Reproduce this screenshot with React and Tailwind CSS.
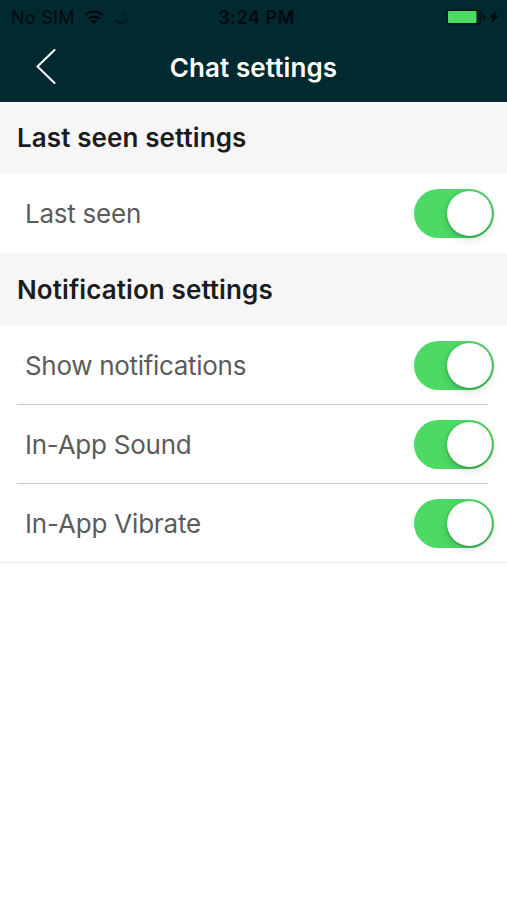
import React, { useState } from "react";

const sections = [
  {
    title: "Last seen settings",
    headerStyle: "h-[71px]",
    rows: [
      { id: "lastSeen", label: "Last seen", rowStyle: "h-20", labelStyle: "tracking-[-0.25px]" },
    ],
  },
  {
    title: "Notification settings",
    headerStyle: "h-[72px] pt-px",
    rows: [
      { id: "notifications", label: "Show notifications", rowStyle: "h-[79px] pt-px", labelStyle: "tracking-[-0.31px]" },
      { id: "sound", label: "In-App Sound", rowStyle: "h-[79px]", labelStyle: "tracking-[-0.25px]" },
      { id: "vibrate", label: "In-App Vibrate", rowStyle: "h-[79px]", labelStyle: "tracking-[-0.18px]" },
    ],
  },
];

const WifiIcon = () => (
  <svg className="ml-[9px] h-[15px] w-5" viewBox="0 0 20 15" fill="none" stroke="#000a0d">
    <path d="M1.2 5.2a12.6 12.6 0 0 1 17.6 0" strokeWidth="2.4" />
    <path d="M4.6 8.8a7.8 7.8 0 0 1 10.8 0" strokeWidth="2.4" />
    <path d="M10 14.3 6.7 11a4.7 4.7 0 0 1 6.6 0z" fill="#000a0d" stroke="none" />
  </svg>
);

const SpinnerIcon = () => (
  <svg className="ml-[10px] h-[14px] w-[14px]" viewBox="0 0 14 14" stroke="#000a0d" strokeWidth="1.4">
    <path d="M8.8 3.6 10.3 1.2" opacity=".4" />
    <path d="m10.4 5 2.4-1.3" opacity=".5" />
    <path d="M10.6 7h2.9" opacity=".4" />
    <path d="m10.4 9 2.4 1.3" opacity=".55" />
    <path d="m8.8 10.4 1.5 2.4" opacity=".6" />
    <path d="M7 10.4v3.1" opacity=".7" />
    <path d="m5.2 10.4-1.5 2.4" />
    <path d="m3.6 9-2.4 1.3" opacity=".9" />
  </svg>
);

const BatteryIcon = () => (
  <svg className="h-4 w-[54px]" viewBox="0 0 54 16">
    <rect x="1" y="1" width="34" height="14" rx="2.5" fill="#002026" stroke="#001217" />
    <rect x="2" y="2" width="28.5" height="12" rx="1" fill="#4cd964" />
    <path d="M37.2 5.2c3 .8 3 4.8 0 5.6z" fill="#000a0d" />
    <path d="m50.6 1.8-7.4 7.2h3.9L45.2 14.4l8.2-7.6h-4.4z" fill="#000a0d" />
  </svg>
);

const Toggle = ({ label, checked, onChange }) => (
  <button
    type="button"
    role="switch"
    aria-label={label}
    aria-checked={checked}
    onClick={onChange}
    className={`flex h-[49px] w-20 items-center rounded-full px-[2px] ${
      checked ? "justify-end bg-[#4cd964]" : "justify-start bg-[#e5e5e5]"
    }`}
  >
    <span className="h-[45px] w-[45px] rounded-full bg-white shadow-[0_4px_10px_rgba(0,0,0,0.12),0_1px_3px_rgba(0,0,0,0.3)]" />
  </button>
);

const App = () => {
  const [settings, setSettings] = useState({
    lastSeen: true,
    notifications: true,
    sound: true,
    vibrate: true,
  });

  const toggle = (id) => setSettings((prev) => ({ ...prev, [id]: !prev[id] }));

  return (
    <div className="min-h-screen bg-white font-['Inter','Liberation_Sans',sans-serif]">
      <header className="h-[102px] bg-[#002930]">
        <div className="grid h-[34px] grid-cols-[1fr_auto_1fr] items-center text-[18px] leading-none text-[#000a0d]">
          <div className="flex items-center pt-px pl-[11px]">
            <span className="tracking-[0.3px]">No SIM</span>
            <WifiIcon />
            <SpinnerIcon />
          </div>
          <span className="pt-px pl-[6px] font-semibold tracking-[0.55px]">3:24 PM</span>
          <div className="flex justify-end pr-[7px]">
            <BatteryIcon />
          </div>
        </div>
        <div className="grid h-[66px] grid-cols-[1fr_auto_1fr] items-center">
          <button type="button" aria-label="Back" className="justify-self-start pl-9">
            <svg className="h-9 w-5" viewBox="0 0 20 36" fill="none" stroke="white" strokeWidth="2" strokeLinecap="round">
              <path d="M18.5 1 1.5 17.5l17 16.5" />
            </svg>
          </button>
          <h1 className="text-[26px] font-semibold tracking-[0.1px] text-white">Chat settings</h1>
        </div>
      </header>

      <main>
        {sections.map((section) => (
          <section key={section.title}>
            <h2 className={`flex items-center bg-[#f6f6f6] pl-[17px] text-[26px] font-semibold tracking-[0.1px] text-[#1c1c1e] ${section.headerStyle}`}>
              {section.title}
            </h2>
            {section.rows.map((row, index) => (
              <div key={row.id} className={`flex flex-col ${row.rowStyle}`}>
                {index > 0 && <div className="ml-[17px] mr-[19px] h-px bg-[#c8c7cc]" />}
                <div className="flex flex-1 items-center justify-between pl-[25px] pr-[13px]">
                  <span className={`text-[26px] text-[#5b5b5b] ${row.labelStyle}`}>{row.label}</span>
                  <Toggle
                    label={row.label}
                    checked={settings[row.id]}
                    onChange={() => toggle(row.id)}
                  />
                </div>
              </div>
            ))}
          </section>
        ))}
        <div className="h-px bg-[#f3f3f3]" />
      </main>
    </div>
  );
};

export default App;
